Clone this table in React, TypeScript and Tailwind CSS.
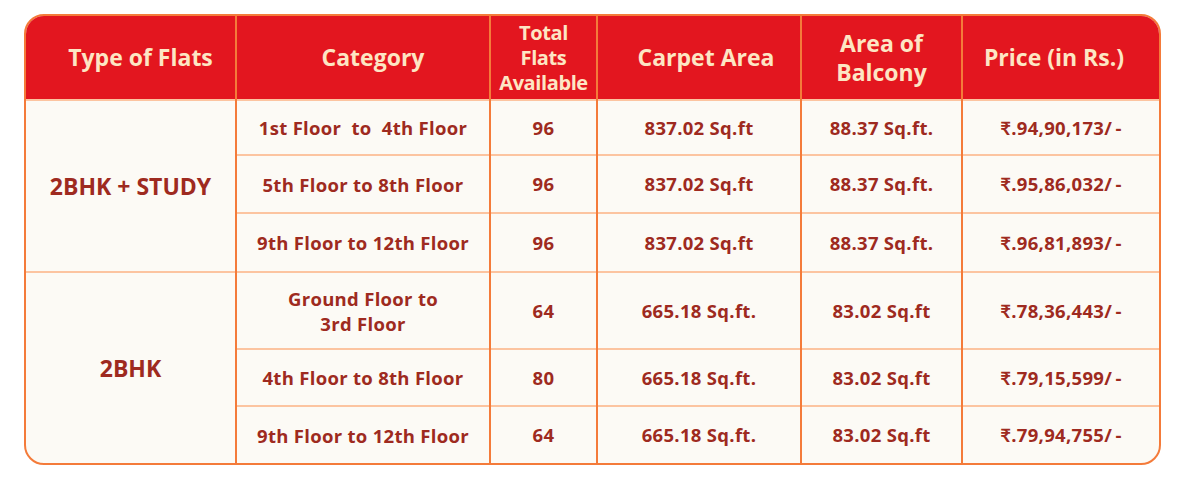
const rows = [
  { cat: "1st Floor\u00a0 to\u00a0 4th Floor", total: "96", carpet: "837.02 Sq.ft", balcony: "88.37 Sq.ft.", price: "₹.94,90,173/\u2009-", h: "h-[55px]" },
  { cat: "5th Floor to 8th Floor", total: "96", carpet: "837.02 Sq.ft", balcony: "88.37 Sq.ft.", price: "₹.95,86,032/\u2009-", h: "h-[58px]" },
  { cat: "9th Floor to 12th Floor", total: "96", carpet: "837.02 Sq.ft", balcony: "88.37 Sq.ft.", price: "₹.96,81,893/\u2009-", h: "h-[59px]" },
  { cat: "Ground Floor to\n3rd Floor", total: "64", carpet: "665.18 Sq.ft.", balcony: "83.02 Sq.ft", price: "₹.78,36,443/\u2009-", h: "h-[77px]" },
  { cat: "4th Floor to 8th Floor", total: "80", carpet: "665.18 Sq.ft.", balcony: "83.02 Sq.ft", price: "₹.79,15,599/\u2009-", h: "h-[57px]" },
  { cat: "9th Floor to 12th Floor", total: "64", carpet: "665.18 Sq.ft.", balcony: "83.02 Sq.ft", price: "₹.79,94,755/\u2009-", h: "h-[57px]" },
];

const th = "border-l-2 border-[#f47b3a] first:border-l-0 text-center font-bold text-[#fde6c4]";
const td = "border-l-2 border-t-2 border-l-[#f47b3a] border-t-[#fcc4a0] text-center text-[18.5px] tracking-[0.3px] font-bold text-[#9e2a20]";

export default function App() {
  return (
    <div className="min-h-[480px] w-[1177px] bg-white pl-[24px] pt-[14px]" style={{ fontFamily: "'Open Sans', Lato, sans-serif" }}>
      <div className="w-[1137px] overflow-hidden rounded-[20px] border-2 border-[#f47b3a] bg-[#fcfaf5]">
        <table className="w-full table-fixed border-collapse">
          <colgroup>
            <col className="w-[210px]" />
            <col className="w-[254px]" />
            <col className="w-[107px]" />
            <col className="w-[204px]" />
            <col className="w-[161px]" />
            <col className="w-[197px]" />
          </colgroup>
          <thead>
            <tr className="h-[84px] bg-[#e3161f]">
              <th className={`${th} pl-[20px] text-[23px]`}>Type of Flats</th>
              <th className={`${th} pl-[20px] text-[23px]`}>Category</th>
              <th className={`${th} text-[20px] leading-[25px] tracking-[-0.4px]`}>Total<br />Flats<br />Available</th>
              <th className={`${th} pl-[14px] text-[23px]`}>Carpet Area</th>
              <th className={`${th} text-[23px] leading-[29px]`}>Area of<br />Balcony</th>
              <th className={`${th} pr-[14px] text-[23px]`}>Price (in Rs.)</th>
            </tr>
          </thead>
          <tbody>
            {rows.map((r, i) => (
              <tr key={i} className={r.h}>
                {i % 3 === 0 && (
                  <td rowSpan={3} className="border-t-2 border-[#fcc4a0] text-center text-[23px] font-bold text-[#9e2a20]">
                    {i === 0 ? "2BHK + STUDY" : "2BHK"}
                  </td>
                )}
                <td className={`${td} whitespace-pre-line leading-[25px]`}>{r.cat}</td>
                <td className={td}>{r.total}</td>
                <td className={td}>{r.carpet}</td>
                <td className={td}>{r.balcony}</td>
                <td className={td}>{r.price}</td>
              </tr>
            ))}
          </tbody>
        </table>
      </div>
    </div>
  );
}
